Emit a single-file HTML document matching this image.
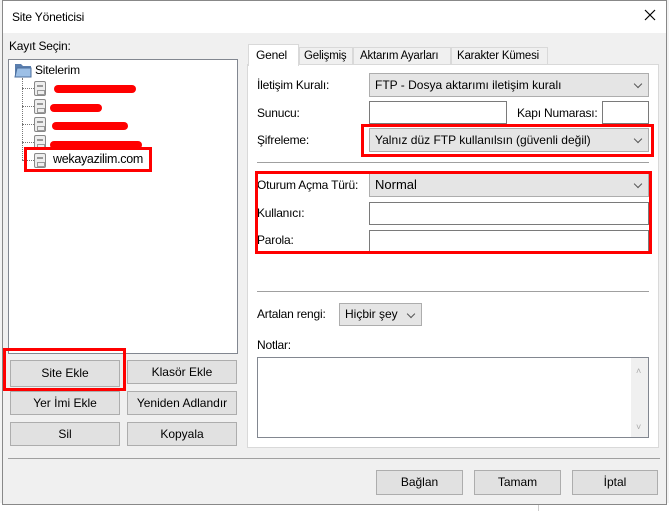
<!DOCTYPE html>
<html><head><meta charset="utf-8"><style>
*{box-sizing:border-box;margin:0;padding:0}
body{width:669px;height:511px;background:#fff;font-family:"Liberation Sans","DejaVu Sans",sans-serif;font-size:12px;color:#000;position:relative;overflow:hidden}
.a{position:absolute}
.btn{position:absolute;background:#e1e1e1;border:1px solid #adadad;text-align:center;font-size:12px}
.inp{position:absolute;background:#fff;border:1px solid #7a7a7a}
.cmb{position:absolute;background:#e5e5e5;border:1px solid #adadad;padding-left:5px;font-size:12px}
.cmb:after{content:"";position:absolute;right:7px;top:7px;width:5px;height:5px;border-right:1px solid #555;border-bottom:1px solid #555;transform:rotate(45deg)}
.red{position:absolute;border:3px solid #f00}
.lbl{position:absolute;font-size:12px;letter-spacing:-0.2px}
.ic{position:absolute;width:12px;height:15px;border:1px solid #888;border-radius:2px;background:#eee}
.ic:before{content:"";position:absolute;left:2px;top:3px;width:6px;height:2px;background:#999}
.ic:after{content:"";position:absolute;left:2px;top:8px;width:6px;height:3px;border:1px solid #999}
.dot{position:absolute;border-top:1px dotted #777}
.rs{position:absolute;height:8px;background:#f00;border-radius:4px}
</style></head><body>
<div class="a" style="left:0;top:0;width:669px;height:511px;background:#f3f3f3"></div>
<div class="a" style="left:160px;top:0;width:20px;height:4px;background:#999"></div>
<div class="a" style="left:0;top:503px;width:669px;height:8px;background:#fff"></div>
<div class="a" style="left:538px;top:505px;width:1px;height:6px;background:#ccc"></div>
<div class="a" style="left:2px;top:0;width:665px;height:505px;border:1px solid #888;background:#f0f0f0"></div>
<div class="a" style="left:3px;top:1px;width:663px;height:32px;background:#fff"></div>
<div class="lbl" style="left:12px;top:10px">Site Yöneticisi</div>
<svg class="a" style="left:644px;top:9px" width="12" height="12"><path d="M1 1L11 11M11 1L1 11" stroke="#000" stroke-width="1.2"/></svg>

<div class="lbl" style="left:9px;top:39px">Kayıt Seçin:</div>
<div class="a" style="left:8px;top:59px;width:230px;height:295px;background:#fff;border:1px solid #828790"></div>
<svg class="a" style="left:14px;top:62px" width="18" height="16"><path d="M1 2h6l2 2h8v11H1z" fill="#5b7fae"/><path d="M3 6h14v9H1z" fill="#9cbfe6" stroke="#4c6f9e"/></svg>
<div class="lbl" style="left:35px;top:63px">Sitelerim</div>
<div class="a" style="left:22px;top:78px;height:82px;border-left:1px dotted #777"></div>
<div class="dot" style="left:22px;top:88px;width:12px"></div><div class="ic" style="left:34px;top:81px"></div><div class="rs" style="left:54px;top:85px;width:82px"></div>
<div class="dot" style="left:22px;top:106px;width:12px"></div><div class="ic" style="left:34px;top:99px"></div><div class="rs" style="left:50px;top:104px;width:52px"></div>
<div class="dot" style="left:22px;top:124px;width:12px"></div><div class="ic" style="left:34px;top:117px"></div><div class="rs" style="left:52px;top:122px;width:76px"></div>
<div class="dot" style="left:22px;top:142px;width:12px"></div><div class="ic" style="left:34px;top:135px"></div><div class="rs" style="left:50px;top:141px;width:92px"></div>
<div class="dot" style="left:22px;top:160px;width:12px"></div><div class="ic" style="left:34px;top:153px"></div>
<div class="lbl" style="left:53px;top:152px;font-size:12.5px;letter-spacing:-0.3px">wekayazilim.com</div>
<div class="red" style="left:24px;top:147px;width:128px;height:25px"></div>

<div class="btn" style="left:10px;top:360px;width:110px;height:27px;line-height:25px">Site Ekle</div>
<div class="red" style="left:3px;top:348px;width:123px;height:43px"></div>
<div class="btn" style="left:127px;top:360px;width:110px;height:24px;line-height:22px">Klasör Ekle</div>
<div class="btn" style="left:10px;top:391px;width:110px;height:24px;line-height:22px">Yer İmi Ekle</div>
<div class="btn" style="left:127px;top:391px;width:110px;height:24px;line-height:22px">Yeniden Adlandır</div>
<div class="btn" style="left:10px;top:422px;width:110px;height:24px;line-height:22px">Sil</div>
<div class="btn" style="left:127px;top:422px;width:110px;height:24px;line-height:22px">Kopyala</div>

<div class="a" style="left:247px;top:64px;width:412px;height:384px;background:#fff;border:1px solid #d9d9d9"></div>
<div class="a" style="left:299px;top:47px;width:54px;height:18px;background:#f0f0f0;border:1px solid #d9d9d9"></div>
<div class="a" style="left:353px;top:47px;width:98px;height:18px;background:#f0f0f0;border:1px solid #d9d9d9"></div>
<div class="a" style="left:451px;top:47px;width:97px;height:18px;background:#f0f0f0;border:1px solid #d9d9d9"></div>
<div class="a" style="left:248px;top:44px;width:51px;height:22px;background:#fff;border:1px solid #d9d9d9;border-bottom:none"></div>
<div class="lbl" style="left:256px;top:48px">Genel</div>
<div class="lbl" style="left:304px;top:50px;font-size:11.5px">Gelişmiş</div>
<div class="lbl" style="left:360px;top:50px;font-size:11.5px">Aktarım Ayarları</div>
<div class="lbl" style="left:457px;top:50px;font-size:11.5px">Karakter Kümesi</div>

<div class="lbl" style="left:257px;top:78px">İletişim Kuralı:</div>
<div class="cmb" style="left:369px;top:73px;width:280px;height:24px;line-height:22px">FTP - Dosya aktarımı iletişim kuralı</div>
<div class="lbl" style="left:257px;top:106px">Sunucu:</div>
<div class="inp" style="left:369px;top:101px;width:138px;height:23px"></div>
<div class="lbl" style="left:517px;top:106px">Kapı Numarası:</div>
<div class="inp" style="left:602px;top:101px;width:47px;height:23px"></div>
<div class="lbl" style="left:257px;top:133px">Şifreleme:</div>
<div class="cmb" style="left:369px;top:128px;width:280px;height:24px;line-height:22px">Yalnız düz FTP kullanılsın (güvenli değil)</div>
<div class="red" style="left:361px;top:124px;width:293px;height:33px"></div>
<div class="a" style="left:257px;top:162px;width:392px;height:1px;background:#a0a0a0"></div>
<div class="lbl" style="left:257px;top:178px">Oturum Açma Türü:</div>
<div class="cmb" style="left:369px;top:173px;width:280px;height:24px;line-height:22px;font-size:13px">Normal</div>
<div class="lbl" style="left:257px;top:206px">Kullanıcı:</div>
<div class="inp" style="left:369px;top:202px;width:280px;height:23px"></div>
<div class="lbl" style="left:257px;top:233px">Parola:</div>
<div class="inp" style="left:369px;top:230px;width:280px;height:23px"></div>
<div class="red" style="left:255px;top:171px;width:397px;height:83px"></div>
<div class="a" style="left:257px;top:291px;width:392px;height:1px;background:#a0a0a0"></div>
<div class="lbl" style="left:257px;top:307px">Artalan rengi:</div>
<div class="cmb" style="left:339px;top:303px;width:83px;height:23px;line-height:21px">Hiçbir şey</div>
<div class="lbl" style="left:257px;top:338px">Notlar:</div>
<div class="inp" style="left:257px;top:357px;width:392px;height:81px;border-color:#828790"></div>
<div class="a" style="left:631px;top:358px;width:17px;height:79px;background:#f0f0f0"></div>
<div class="a" style="left:636px;top:366px;font-size:9px;color:#aaa">˄</div>
<div class="a" style="left:636px;top:422px;font-size:9px;color:#aaa">˅</div>

<div class="a" style="left:8px;top:458px;width:652px;height:1px;background:#a0a0a0"></div>
<div class="btn" style="left:376px;top:470px;width:87px;height:25px;line-height:23px">Bağlan</div>
<div class="btn" style="left:474px;top:470px;width:87px;height:25px;line-height:23px">Tamam</div>
<div class="btn" style="left:572px;top:470px;width:86px;height:25px;line-height:23px">İptal</div>
</body></html>
